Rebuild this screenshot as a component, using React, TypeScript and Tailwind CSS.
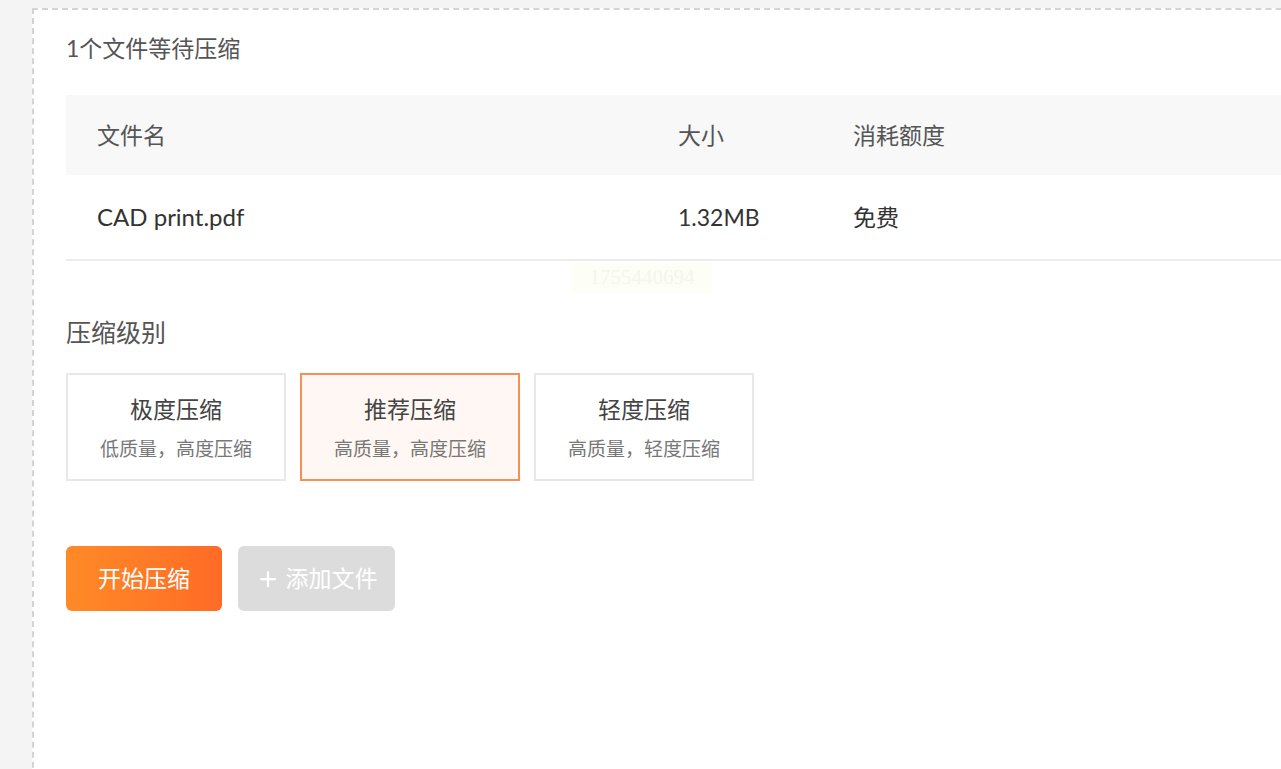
import { Plus } from 'lucide-react';

const LEVELS = [
  { title: '极度压缩', desc: '低质量，高度压缩', active: false },
  { title: '推荐压缩', desc: '高质量，高度压缩', active: true },
  { title: '轻度压缩', desc: '高质量，轻度压缩', active: false },
];

export default function App() {
  return (
    <div className="h-[769px] w-[1281px] overflow-hidden bg-[#f4f4f4] pl-[32px] pt-[8px] font-['Lato','Noto_Sans_CJK_SC',sans-serif]">
      <div className="relative h-[800px] w-[1400px] border-l-2 border-t-2 border-dashed border-[#d4d4d4] bg-white pl-[32px] pt-[23px]">
        <p className="text-[23px] leading-[30px] text-[#555]">1个文件等待压缩</p>

        {/* file table */}
        <div className="mt-[32px] w-[1300px]">
          <div className="flex h-[80px] items-center bg-[#f8f8f8] text-[23px] text-[#555]">
            <div className="w-[612px] pl-[31px]">文件名</div>
            <div className="w-[175px]">大小</div>
            <div>消耗额度</div>
          </div>
          <div className="flex h-[86px] items-center border-b-2 border-[#ececec] text-[23px] text-[#333]">
            <div className="w-[612px] pl-[31px] text-[24px]">CAD print.pdf</div>
            <div className="w-[175px]">1.32MB</div>
            <div>免费</div>
          </div>
        </div>

        {/* watermark */}
        <div className="absolute left-[538px] top-[253px] flex h-[30px] w-[140px] items-center justify-center bg-[#fdfff6] font-['Liberation_Serif',serif] text-[21px] text-[#f4f4f0]">
          1755440694
        </div>

        <p className="mt-[56px] text-[25px] leading-[30px] text-[#555]">压缩级别</p>

        <div className="mt-[26px] flex gap-[14px]">
          {LEVELS.map((l) => (
            <div
              key={l.title}
              className={`flex h-[108px] w-[220px] flex-col items-center justify-center border-2 ${
                l.active ? 'border-[#f69155] bg-[#fff7f3]' : 'border-[#e8e8e8] bg-white'
              }`}
            >
              <p className="text-[23px] leading-[30px] text-[#444]">{l.title}</p>
              <p className="mt-[14px] text-[19px] leading-[22px] text-[#777]">{l.desc}</p>
            </div>
          ))}
        </div>

        <div className="mt-[65px] flex gap-[16px]">
          <button className="flex h-[65px] w-[156px] items-center justify-center rounded-[6px] bg-gradient-to-r from-[#ff8a26] to-[#ff6b26] text-[23px] text-white">
            开始压缩
          </button>
          <button className="flex h-[65px] w-[157px] items-center justify-center gap-[6px] rounded-[6px] bg-[#dcdcdc] text-[23px] text-white">
            <Plus className="h-[24px] w-[24px]" strokeWidth={2.25} />
            添加文件
          </button>
        </div>
      </div>
    </div>
  );
}
